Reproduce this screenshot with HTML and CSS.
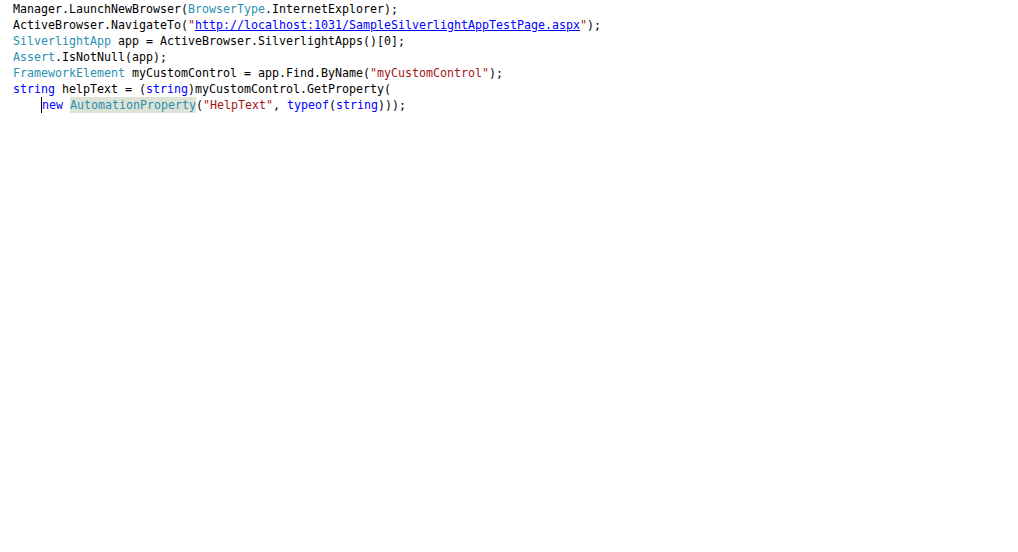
FILE: index.html
```html
<!DOCTYPE html>
<html>
<head>
<meta charset="utf-8">
<link rel="stylesheet" href="styles.css">
</head>
<body>
<div class="code">
<div class="line">Manager.LaunchNewBrowser(<span class="t">BrowserType</span>.InternetExplorer);</div>
<div class="line">ActiveBrowser.NavigateTo(<span class="s">"</span><span class="u">http://localhost:1031/SampleSilverlightAppTestPage.aspx</span><span class="s">"</span>);</div>
<div class="line"><span class="t">SilverlightApp</span> app = ActiveBrowser.SilverlightApps()[0];</div>
<div class="line"><span class="t">Assert</span>.IsNotNull(app);</div>
<div class="line"><span class="t">FrameworkElement</span> myCustomControl = app.Find.ByName(<span class="s">"myCustomControl"</span>);</div>
<div class="line"><span class="k">string</span> helpText = (<span class="k">string</span>)myCustomControl.GetProperty(</div>
<div class="line">    <span class="caret"></span><span class="k">new</span> <span class="t hl">AutomationProperty</span>(<span class="s">"HelpText"</span>, <span class="k">typeof</span>(<span class="k">string</span>)));</div>
</div>
</body>
</html>
```
FILE: styles.css
```css
html, body {
  margin: 0;
  padding: 0;
  background: #ffffff;
}
.code {
  padding: 1px 0 0 13px;
  font-family: "DejaVu Sans Mono", "Liberation Mono", monospace;
  font-size: 11.63px;
  line-height: 16px;
  color: #000000;
}
.line {
  height: 16px;
  white-space: pre;
}
.t { color: #2b91af; }
.k { color: #0000ff; }
.s { color: #a31515; }
.u { color: #0000ff; text-decoration: underline; }
.hl {
  display: inline-block;
  height: 16px;
  background: #dde3d5;
}
.caret {
  display: inline-block;
  width: 0;
  height: 16px;
  border-left: 1px solid #000000;
  vertical-align: top;
}
```
